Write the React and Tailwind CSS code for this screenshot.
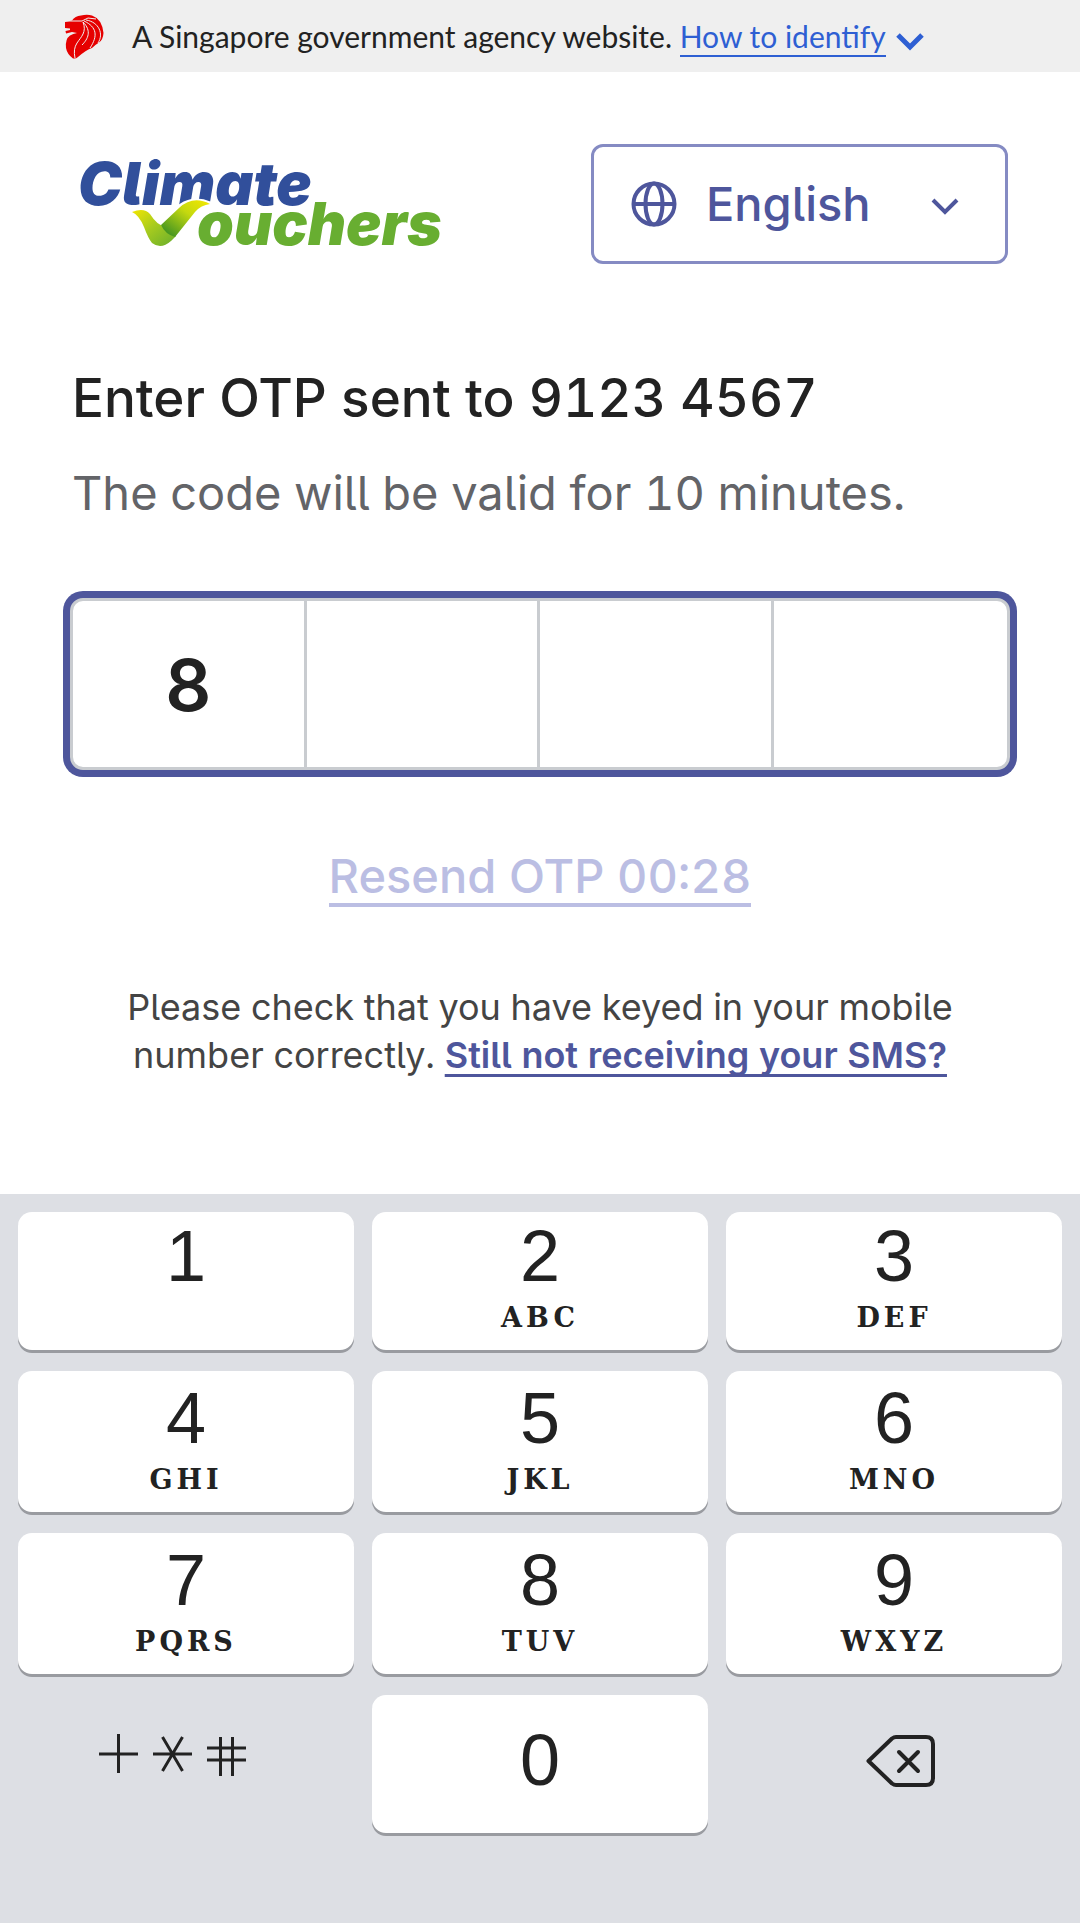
import React, { useState } from "react";

const inter = "font-['Inter',sans-serif] [font-feature-settings:'cv05','tnum']";

function LionIcon() {
  return (
    <svg viewBox="0 0 40 45" className="h-[45px] w-10 shrink-0" aria-hidden="true">
      <path
        fill="#e60000"
        d="M1 8 L8 6.500 Q11 2 17 1.500 Q23 0 28 1.500 Q38 5 39.500 19 Q39 26 35 28.500 Q31 31 28 34 Q22 36 14 43 Q12 45 9 44.500 Q3 40 2 34 Q1 25 6 21.500 Q9 19.500 13 19 L8 18 L2 19.500 L1.500 17 L6 16 L6 14.500 L1 14 Z"
      />
      <g fill="none" stroke="#f0f0f0" strokeWidth="1">
        <path d="M1 7 H18 L24 4 L32 5" />
        <path d="M19 8 C23 18 17 23 13 29 Q9 35 11 44" />
        <path d="M19 8 C28 17 24 25 18 31" />
        <path d="M20 7 C33 13 34 22 26 34" />
        <path d="M22 6 C35 8 40 20 34 29" />
      </g>
    </svg>
  );
}

function Logo() {
  return (
    <svg viewBox="0 0 368 90" className="h-[90px] w-[368px] shrink-0 overflow-visible" role="img" aria-label="Climate Vouchers">
      <defs>
        <linearGradient id="left" x1="0" y1="0" x2="1" y2="1">
          <stop offset="0" stopColor="#f2e600" />
          <stop offset="0.45" stopColor="#a9cc1e" />
          <stop offset="1" stopColor="#66ad2d" />
        </linearGradient>
        <linearGradient id="right" x1="1" y1="0" x2="0" y2="1">
          <stop offset="0" stopColor="#f5e800" />
          <stop offset="0.4" stopColor="#c5d90f" />
          <stop offset="1" stopColor="#268526" />
        </linearGradient>
      </defs>
      <g fontFamily="Inter, sans-serif" fontWeight="900" fontStyle="italic" fontSize="59">
        <text x="-1" y="46" fill="#314f9b">Climate</text>
        <text x="118" y="86" fill="#68ae31">ouchers</text>
      </g>
      <path d="M83 64 L102 47 Q115 38 131 45 Q121 47 115 54" fill="none" stroke="#fff" strokeWidth="5" />
      <path d="M53 53 Q65 48 71 55 Q78 66 85 67 Q90 75 97 77 L92 82 Q82 91 73 84 Q69 79 65 68 Q60 56 53 53Z" fill="url(#left)" />
      <path d="M82 66 L100 49 Q114 36 131 45 Q122 46 116 53 L96 78 Q86 75 82 66Z" fill="url(#right)" />
    </svg>
  );
}

function Chevron({ className, width }) {
  return (
    <svg viewBox="0 0 28 18" className={className} fill="none" stroke="currentColor" strokeWidth={width} aria-hidden="true">
      <path d="M2 2 L14 14 L26 2" />
    </svg>
  );
}

function Globe() {
  return (
    <svg viewBox="0 0 46 46" className="pointer-events-none absolute top-1/2 left-10 size-[46px] -translate-y-1/2" fill="none" stroke="currentColor" strokeWidth="4" aria-hidden="true">
      <circle cx="23" cy="23" r="20.500" />
      <ellipse cx="23" cy="23" rx="8.500" ry="20.500" />
      <path d="M3 23 H43" />
    </svg>
  );
}

const keys = [
  ["1", ""], ["2", "ABC"], ["3", "DEF"],
  ["4", "GHI"], ["5", "JKL"], ["6", "MNO"],
  ["7", "PQRS"], ["8", "TUV"], ["9", "WXYZ"],
];

const keyStyle = "flex flex-col items-center rounded-[14px] bg-white font-['Liberation_Sans',sans-serif] text-[72px] leading-[72px] text-[#222] shadow-[0_3px_0_#999ba0]";

export default function App() {
  const [code, setCode] = useState(["8", "", "", ""]);
  const press = (digit) =>
    setCode((prev) => {
      const at = prev.indexOf("");
      return at < 0 ? prev : prev.map((d, i) => (i === at ? digit : d));
    });
  const erase = () =>
    setCode((prev) => {
      const used = prev.filter(Boolean).length;
      return prev.map((d, i) => (i === used - 1 ? "" : d));
    });

  return (
    <div className={`flex min-h-screen flex-col bg-white text-[#222] ${inter}`}>
      <header className="flex h-[72px] items-center bg-[#efefef] pl-16 font-['Lato',sans-serif] text-[30px] leading-9 text-[#222]">
        <LionIcon />
        <p className="ml-7 whitespace-nowrap">
          A Singapore government agency website.{" "}
          <a href="#identify" className="border-b-2 border-[#2e5fd3] pb-px text-[#2e5fd3]">How to identify</a>
        </p>
        <Chevron className="mt-3 ml-2.5 h-[18px] w-7 text-[#2e5fd3]" width="5" />
      </header>

      <main className="flex flex-1 flex-col px-[63px] pt-[72px]">
        <div className="flex items-center justify-between pr-[9px] pl-4">
          <Logo />
          <div className="relative w-[417px] text-[#4e569c]">
            <Globe />
            <select aria-label="Language" className="block h-[120px] w-full appearance-none rounded-[12px] border-3 border-[#858bc3] bg-transparent pl-[112px] text-[47px] font-medium">
              <option>English</option>
            </select>
            <Chevron className="pointer-events-none absolute top-[54px] right-[49px] h-[18px] w-7" width="4" />
          </div>
        </div>

        <h1 className="mt-[100px] pl-[9px] text-[53px] leading-[68px] font-medium whitespace-nowrap">Enter OTP sent to 9123 4567</h1>
        <p className="mt-7 pl-[9px] text-[47px] leading-[66px] whitespace-nowrap text-[#636468]">The code will be valid for 10 minutes.</p>

        <div className="mt-[65px] rounded-[20px] bg-[#4e569c] p-[7px]">
          <div className="grid grid-cols-4 overflow-hidden rounded-[13px] border-3 border-[#c9ccd0] bg-white">
            {code.map((digit, i) => (
              <input
                key={i}
                aria-label={`Digit ${i + 1}`}
                inputMode="numeric"
                maxLength={1}
                value={digit}
                onChange={(e) => setCode(code.map((d, n) => (n === i ? e.target.value : d)))}
                className="h-[166px] w-full min-w-0 border-[#c9ccd0] text-center text-[72px] font-semibold outline-none not-last:border-r-3"
              />
            ))}
          </div>
        </div>

        <button type="button" disabled className="mt-[72px] self-center border-b-4 border-[#bbbee3] text-[47px] leading-[54px] font-medium text-[#bbbee3]">
          Resend OTP 00:28
        </button>

        <p className="mx-auto mt-[76px] mb-16 max-w-[880px] text-center text-[36px] leading-[48px] text-[#444]">
          Please check that you have keyed in your mobile number correctly.{" "}
          <a href="#help" className="font-semibold text-[#4e569c] underline decoration-3 underline-offset-6 [text-decoration-skip-ink:none]">Still not receiving your SMS?</a>
        </p>
      </main>

      <section aria-label="Keypad" className="grid grid-cols-3 grid-rows-[138px_141px_141px_138px] gap-x-[18px] gap-y-[21px] bg-[#dddfe4] px-[18px] pt-[18px] pb-[90px]">
        {keys.map(([digit, letters]) => (
          <button key={digit} type="button" onClick={() => press(digit)} className={`${keyStyle} justify-end gap-2 pb-3.5`}>
            <span>{digit}</span>
            <span className="h-9 font-['DejaVu_Serif',serif] text-[27px] leading-9 font-bold tracking-[4px]">{letters}</span>
          </button>
        ))}
        <button type="button" aria-label="Symbols" className="flex items-center justify-center pr-[26px] pb-[18px] text-[#222]">
          <svg viewBox="0 0 148 44" className="h-11 w-[148px]" fill="none" stroke="currentColor" strokeWidth="3" aria-hidden="true">
            <path d="M0 21 H39 M19.500 1 V40" />
            <path d="M54 21 H93 M63.500 4 L83.500 38 M83.500 4 L63.500 38" />
            <path d="M108 15 H147 M108 27 H147 M121.500 4 V43 M133.500 4 V43" />
          </svg>
        </button>
        <button type="button" onClick={() => press("0")} className={`${keyStyle} justify-center pb-2`}>0</button>
        <button type="button" aria-label="Delete" onClick={erase} className="flex items-center justify-center pb-1.5 pl-3.5 text-[#222]">
          <svg viewBox="0 0 70 52" className="h-[52px] w-[70px]" fill="none" stroke="currentColor" strokeWidth="4" strokeLinejoin="round" strokeLinecap="round" aria-hidden="true">
            <path d="M2.500 26 L26 3.500 Q28 2 30 2 H60 Q67 2 67 9 V43 Q67 50 60 50 H30 Q28 50 26 48.500 Z" />
            <path d="M33 17 L52 36 M52 17 L33 36" />
          </svg>
        </button>
      </section>
    </div>
  );
}
